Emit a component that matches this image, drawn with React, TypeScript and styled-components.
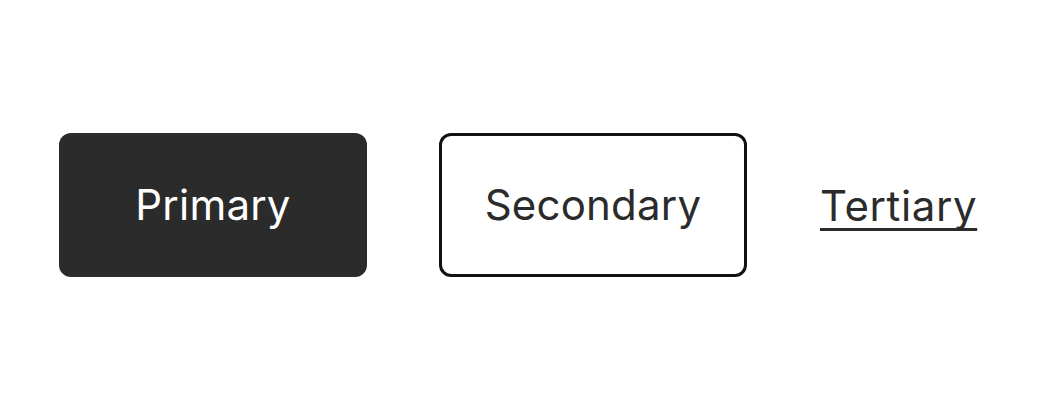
import styled, { createGlobalStyle } from 'styled-components'

const GlobalStyle = createGlobalStyle`
    html, body {
        margin: 0;
        padding: 0;
        background: #ffffff;
    }
    body {
        font-family: Inter, "Noto Sans", "Liberation Sans", sans-serif;
    }
`;

const Stage = styled.div`
    width: 1040px;
    height: 404px;
    display: flex;
    align-items: center;
    padding: 6px 0 0 59px;
    box-sizing: border-box;
    gap: 72px;
`;

const Button = styled.button<{ $variant: 'primary' | 'secondary' }>`
    width: 308px;
    height: 144px;
    box-sizing: border-box;
    border-radius: 12px;
    font-family: inherit;
    font-size: 42px;
    font-weight: 400;
    letter-spacing: 0.2px;
    cursor: pointer;
    display: flex;
    align-items: center;
    justify-content: center;
    padding: 0 0 2px;
    background: ${p => (p.$variant === 'primary' ? '#2b2b2b' : '#ffffff')};
    color: ${p => (p.$variant === 'primary' ? '#ffffff' : '#2b2b2b')};
    border: ${p => (p.$variant === 'primary' ? 'none' : '3px solid #111111')};
`;

const TextButton = styled.button`
    background: none;
    border: none;
    padding: 0;
    margin-left: 1px;
    font-family: inherit;
    font-size: 42px;
    font-weight: 400;
    letter-spacing: 0.6px;
    color: #2b2b2b;
    cursor: pointer;
    text-decoration: underline;
    text-decoration-thickness: 3px;
    text-underline-offset: 7px;
    text-decoration-skip-ink: none;
`;

export default function App() {
    return (
        <>
            <GlobalStyle />
            <Stage>
                <Button $variant="primary">Primary</Button>
                <Button $variant="secondary">Secondary</Button>
                <TextButton>Tertiary</TextButton>
            </Stage>
        </>
    )
}
